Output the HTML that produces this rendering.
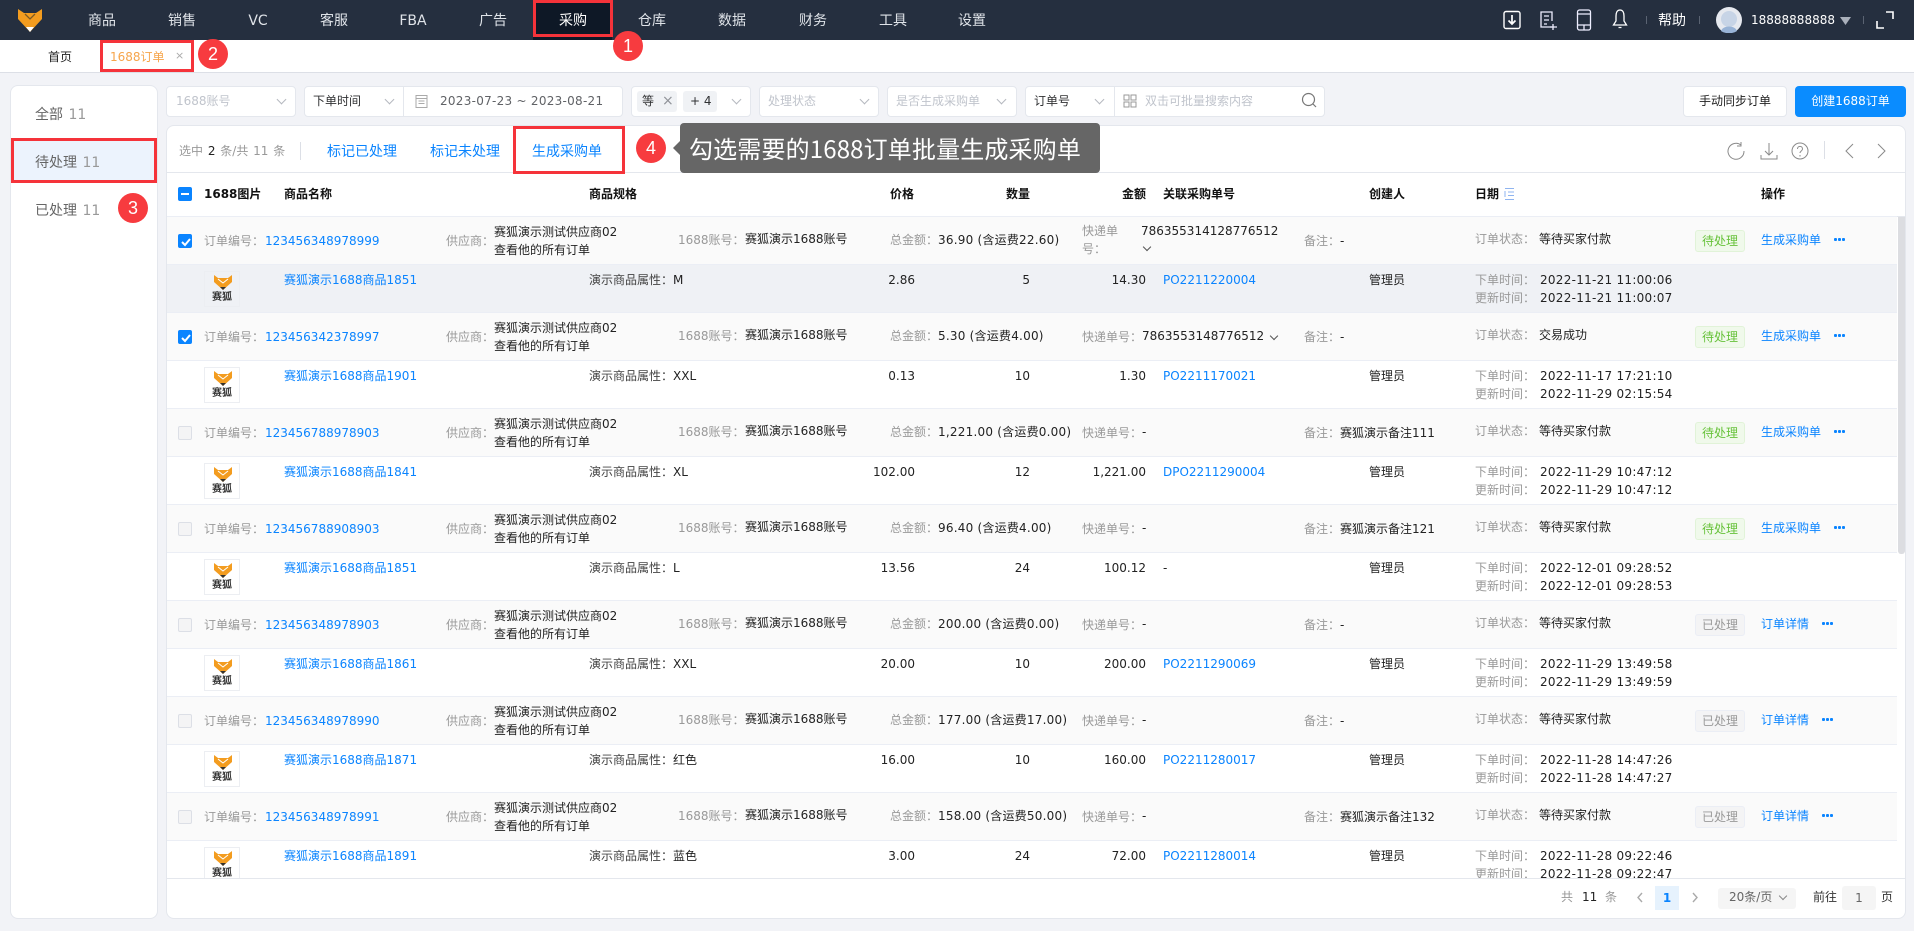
<!DOCTYPE html>
<html lang="zh-CN">
<head>
<meta charset="utf-8">
<title>1688订单</title>
<style>
*{box-sizing:border-box;margin:0;padding:0}
html,body{width:1914px;height:931px;overflow:hidden;background:#f2f3f7}
body{position:relative;font:12px/18px "DejaVu Sans","Noto Sans CJK SC",sans-serif;color:#222}
.a,.a>*{white-space:nowrap}
.a{position:absolute}
.n{position:absolute;top:12px;font-size:14px;color:#dfe3e8;transform:translateX(-50%);white-space:nowrap}
.box{position:absolute;background:#fff;border:1px solid #e4e7ed;border-radius:4px}
.g{color:#999}
.p{color:#c0c4cc}
.l{color:#0a84ff}
.chev{position:absolute;width:7px;height:7px;border-right:1px solid #b5b8bf;border-bottom:1px solid #b5b8bf;transform:rotate(45deg)}
.red{position:absolute;border:3px solid #f5333a}
.bd{position:absolute;width:30px;height:30px;border-radius:50%;background:#f73b3f;color:#fff;text-align:center;font:18px/30px "Liberation Sans",sans-serif}
.o,.q{position:absolute;left:0;width:1897px;height:48px}
.o{background:linear-gradient(#ebeef5,#ebeef5) 167px 0/1730px 1px no-repeat,linear-gradient(#fafafa,#fafafa) 167px 0/1730px 100% no-repeat}
.q{background:linear-gradient(#ebeef5,#ebeef5) 167px 0/1730px 1px no-repeat}
.q.h{background:linear-gradient(#ebeef5,#ebeef5) 167px 0/1730px 1px no-repeat,linear-gradient(#eff1f5,#eff1f5) 167px 0/1730px 100% no-repeat}
.cb{position:absolute;left:178px;top:18px;width:14px;height:14px;border-radius:2px;background:#f4f4f5;border:1px solid #dcdfe6}
.cb.on{background:#0a84ff;border-color:#0a84ff}
.cb.on svg{position:absolute;left:1px;top:1px}
.tag{position:absolute;left:1695px;top:14px;width:50px;height:22px;line-height:20px;text-align:center;border-radius:3px;border:1px solid #e1f3d8;background:#f0f9eb;color:#67c23a}
.tag.d{border-color:#ebeef5;background:#f4f4f5;color:#999}
.more{position:absolute;top:22px;width:11px;height:3px;background:radial-gradient(circle at 1.5px 1.5px,#0a84ff 1.5px,transparent 1.6px) 0 0/4px 3px repeat-x}
.img{position:absolute;left:204px;top:7px;width:36px;height:36px;border:1px solid #eceef2;background:#fff}
.h .img{background:#eff1f5}
.img svg{position:absolute;left:9px;top:3px}
.img b{position:absolute;left:0;right:0;top:17px;text-align:center;font:700 10px/14px "Noto Sans CJK SC",sans-serif;color:#333}
.r{text-align:right}
.sh{position:absolute;top:185px;font-weight:700;color:#111;white-space:nowrap}
.q span[style*="left:1540px"]{letter-spacing:.27px}
.o span[style*="left:938px"]{letter-spacing:.22px}
.q span[style*="right:983px"]{right:982px!important}
.side{word-spacing:1px}
</style>
</head>
<body>
<!-- top nav -->
<div class="a" style="left:0;top:0;width:1914px;height:40px;background:#252f3f"></div>
<div class="a" style="left:533px;top:0;width:79px;height:40px;background:#0e1826"></div>
<svg class="a" style="left:17px;top:8px" width="26" height="25" viewBox="0 0 26 25"><path d="M1 1L7 5H19L25 1V11L13 24L1 11Z" fill="#f39c1f"/><path d="M8 6L13 11L18 6" fill="none" stroke="#7c5a24" stroke-width="1.3"/><path d="M9 19H17L13 24Z" fill="#fff"/></svg>
<span class="n" style="left:102px">商品</span>
<span class="n" style="left:182px">销售</span>
<span class="n" style="left:258px">VC</span>
<span class="n" style="left:334px">客服</span>
<span class="n" style="left:413px">FBA</span>
<span class="n" style="left:493px">广告</span>
<span class="n" style="left:573px;color:#fff">采购</span>
<span class="n" style="left:652px">仓库</span>
<span class="n" style="left:732px">数据</span>
<span class="n" style="left:813px">财务</span>
<span class="n" style="left:893px">工具</span>
<span class="n" style="left:972px">设置</span>
<!-- nav right icons -->
<svg class="a" style="left:1502px;top:10px" width="20" height="20" viewBox="0 0 20 20" fill="none" stroke="#fff" stroke-width="1.4"><rect x="2" y="1.5" width="16" height="17" rx="2"/><path d="M10 5V14M6.5 10.5L10 14L13.5 10.5" stroke-width="1.7"/></svg>
<svg class="a" style="left:1539px;top:10px" width="20" height="20" viewBox="0 0 20 20" fill="none" stroke="#eef" stroke-width="1.3"><path d="M13 17H2V2H13V11"/><path d="M5 6H10M5 10H10M5 14H8M14 14V20M11 17H18"/></svg>
<svg class="a" style="left:1575px;top:9px" width="18" height="22" viewBox="0 0 18 22" fill="none" stroke="#eef" stroke-width="1.3"><rect x="2.5" y="1" width="13" height="20" rx="2"/><path d="M2.5 16H15.5M2.5 5H15.5M9 16V21"/></svg>
<svg class="a" style="left:1611px;top:8px" width="18" height="22" viewBox="0 0 18 22" fill="none" stroke="#fff" stroke-width="1.3"><path d="M9 2C6 2 5 5 5 8V13L2.5 17H15.5L13 13V8C13 5 12 2 9 2ZM7.5 19.5H10.5"/></svg>
<span class="a" style="left:1646px;top:16px;width:1px;height:8px;background:#5a6372"></span>
<span class="a" style="left:1658px;top:12px;font-size:14px;color:#fff">帮助</span>
<span class="a" style="left:1699px;top:16px;width:1px;height:8px;background:#5a6372"></span>
<svg class="a" style="left:1716px;top:7px" width="26" height="26" viewBox="0 0 26 26"><circle cx="13" cy="13" r="13" fill="#e6e9ef"/><circle cx="13" cy="12" r="8" fill="#c7d4e6"/><path d="M5 24C7 18 19 18 21 24C17 27 9 27 5 24Z" fill="#98b3d6"/></svg>
<span class="a" style="left:1751px;top:11px;color:#fff">18888888888</span>
<svg class="a" style="left:1840px;top:17px" width="11" height="8" viewBox="0 0 11 8"><path d="M0 0H11L5.5 8Z" fill="#aab0bb"/></svg>
<span class="a" style="left:1863px;top:16px;width:1px;height:8px;background:#5a6372"></span>
<svg class="a" style="left:1876px;top:10px" width="18" height="20" viewBox="0 0 18 20" fill="none" stroke="#fff" stroke-width="1.6"><path d="M10 2H17V9M1 11V18H8"/></svg>

<!-- tab bar -->
<div class="a" style="left:0;top:40px;width:1914px;height:33px;background:#fff;border-bottom:1px solid #dcdfe6"></div>
<span class="a" style="left:48px;top:48px;color:#222">首页</span>
<span class="a" style="left:110px;top:48px;color:#f6a54b">1688订单</span>
<span class="a" style="left:175px;top:47px;color:#aaa;font-size:11px">×</span>

<!-- sidebar -->
<div class="box" style="left:10px;top:85px;width:148px;height:834px;border-radius:8px"></div>
<div class="a" style="left:12px;top:139px;width:145px;height:44px;background:#ecf3fd;border-left:2px solid #0a84ff"></div>
<span class="a side" style="left:35px;top:106px;font-size:14px;color:#666">全部 <span style="color:#999">11</span></span>
<span class="a side" style="left:35px;top:154px;font-size:14px;color:#666">待处理 <span style="color:#999">11</span></span>
<span class="a side" style="left:35px;top:202px;font-size:14px;color:#666">已处理 <span style="color:#999">11</span></span>

<!-- filters -->
<div class="box" style="left:166px;top:86px;width:130px;height:31px"></div>
<span class="a p" style="left:176px;top:92px">1688账号</span><i class="chev" style="left:278px;top:96px"></i>
<div class="box" style="left:304px;top:86px;width:319px;height:31px"></div>
<span class="a" style="left:313px;top:92px;color:#303133">下单时间</span><i class="chev" style="left:386px;top:96px"></i>
<span class="a" style="left:403px;top:87px;width:1px;height:29px;background:#e4e7ed"></span>
<svg class="a" style="left:415px;top:94px" width="13" height="14" viewBox="0 0 13 14" fill="none" stroke="#aaa"><rect x="1" y="1.5" width="11" height="12"/><path d="M1 4.5H12M3.5 7H9.5M3.5 9.5H9.5"/></svg>
<span class="a" style="left:440px;top:92px;color:#606266;letter-spacing:.27px">2023-07-23 ~ 2023-08-21</span>
<div class="box" style="left:631px;top:86px;width:120px;height:31px"></div>
<span class="a" style="left:637px;top:91px;width:40px;height:21px;background:#f0f2f5;border-radius:3px"></span>
<span class="a" style="left:642px;top:92px;color:#303133">等</span><span class="a" style="left:662px;top:92px;color:#909399;font-size:14px">×</span>
<span class="a" style="left:683px;top:91px;width:34px;height:21px;background:#f0f2f5;border-radius:3px"></span>
<span class="a" style="left:690px;top:92px;color:#303133">+ 4</span><i class="chev" style="left:733px;top:96px"></i>
<div class="box" style="left:759px;top:86px;width:120px;height:31px"></div>
<span class="a p" style="left:768px;top:92px">处理状态</span><i class="chev" style="left:861px;top:96px"></i>
<div class="box" style="left:887px;top:86px;width:130px;height:31px"></div>
<span class="a p" style="left:896px;top:92px">是否生成采购单</span><i class="chev" style="left:998px;top:96px"></i>
<div class="box" style="left:1025px;top:86px;width:300px;height:31px"></div>
<span class="a" style="left:1034px;top:92px;color:#303133">订单号</span><i class="chev" style="left:1096px;top:96px"></i>
<span class="a" style="left:1114px;top:87px;width:1px;height:29px;background:#e4e7ed"></span>
<svg class="a" style="left:1123px;top:94px" width="14" height="14" viewBox="0 0 14 14" fill="none" stroke="#999"><rect x="1" y="1" width="5" height="5"/><rect x="8" y="1" width="5" height="5"/><rect x="1" y="8" width="5" height="5"/><rect x="8" y="8" width="5" height="5"/></svg>
<span class="a p" style="left:1145px;top:92px">双击可批量搜索内容</span>
<svg class="a" style="left:1301px;top:92px" width="16" height="16" viewBox="0 0 16 16" fill="none" stroke="#777" stroke-width="1.2"><circle cx="7.5" cy="7.5" r="6"/><path d="M12 12L15 15"/></svg>
<div class="box" style="left:1683px;top:86px;width:104px;height:31px;text-align:center;line-height:29px;color:#222">手动同步订单</div>
<div class="a" style="left:1795px;top:86px;width:111px;height:31px;border-radius:4px;background:#0a8cff;color:#fff;text-align:center;line-height:31px">创建1688订单</div>

<!-- main card -->
<div class="box" style="left:166px;top:125px;width:1740px;height:794px;border-radius:8px"></div>
<div class="a" style="left:167px;top:172px;width:1738px;height:1px;background:#e4e7ed"></div>
<div class="a" style="left:167px;top:216px;width:1738px;height:1px;background:#e4e7ed"></div>
<span class="a g" style="left:179px;top:142px;word-spacing:1px">选中 <span style="color:#222">2</span> 条/共 11 条</span>
<span class="a" style="left:300px;top:142px;width:1px;height:18px;background:#dcdfe6"></span>
<span class="a l" style="left:327px;top:143px;font-size:14px">标记已处理</span>
<span class="a l" style="left:430px;top:143px;font-size:14px">标记未处理</span>
<span class="a l" style="left:532px;top:143px;font-size:14px">生成采购单</span>
<!-- card toolbar icons -->
<svg class="a" style="left:1726px;top:141px" width="20" height="20" viewBox="0 0 20 20" fill="none" stroke="#8a8a8a" stroke-width="1"><path d="M15 4A8 8 0 1 0 18 10M15 1V5H11"/></svg>
<svg class="a" style="left:1760px;top:141px" width="18" height="20" viewBox="0 0 18 20" fill="none" stroke="#8a8a8a" stroke-width="1"><path d="M9 2V14M5 10L9 14L13 10M1 14V18H17V14"/></svg>
<svg class="a" style="left:1791px;top:141px" width="18" height="20" viewBox="0 0 18 20" fill="none" stroke="#8a8a8a" stroke-width="1"><circle cx="9" cy="10" r="8"/><path d="M6.5 8C6.5 4.5 11.5 4.5 11.5 8C11.5 10 9 10 9 12M9 14V15.5"/></svg>
<span class="a" style="left:1824px;top:141px;width:1px;height:18px;background:#dcdfe6"></span>
<svg class="a" style="left:1844px;top:142px" width="10" height="18" viewBox="0 0 10 18" fill="none" stroke="#8a8a8a" stroke-width="1"><path d="M9 2L2 9L9 16"/></svg>
<svg class="a" style="left:1877px;top:142px" width="10" height="18" viewBox="0 0 10 18" fill="none" stroke="#8a8a8a" stroke-width="1"><path d="M1 2L8 9L1 16"/></svg>

<!-- table head -->
<span class="cb on" style="top:187px;border-radius:2px"><span class="a" style="left:2px;top:5px;width:8px;height:2px;background:#fff"></span></span>
<span class="sh" style="left:204px">1688图片</span>
<span class="sh" style="left:284px">商品名称</span>
<span class="sh" style="left:589px">商品规格</span>
<span class="sh" style="left:890px">价格</span>
<span class="sh" style="left:1006px">数量</span>
<span class="sh" style="left:1122px">金额</span>
<span class="sh" style="left:1163px">关联采购单号</span>
<span class="sh" style="left:1369px">创建人</span>
<span class="sh" style="left:1475px">日期</span>
<svg class="a" style="left:1503px;top:187px" width="12" height="14" viewBox="0 0 12 14" fill="none" stroke="#8fb4f0"><path d="M2 1.5H11M5 5H11M5 8.5H11M2 12.5H11M2 4V10"/></svg>
<span class="sh" style="left:1761px">操作</span>

<!-- table body -->
<div class="a" style="left:0;top:0;width:1897px;height:878px;overflow:hidden">

<div class="o" style="top:216px">
<span class="cb on"><svg width="12" height="12" viewBox="0 0 12 12" fill="none" stroke="#fff" stroke-width="2"><path d="M2 6L5 9L10 3"/></svg></span>
<span class="a g" style="left:204px;top:16px">订单编号：</span><span class="a l" style="left:265px;top:16px">123456348978999</span>
<span class="a g" style="left:446px;top:16px">供应商：</span><span class="a" style="left:494px;top:7px">赛狐演示测试供应商02<br>查看他的所有订单</span>
<span class="a g" style="left:678px;top:15px">1688账号：</span><span class="a" style="left:745px;top:14px">赛狐演示1688账号</span>
<span class="a g" style="left:890px;top:15px">总金额：</span><span class="a" style="left:938px;top:15px">36.90 (含运费22.60)</span>
<span class="a g" style="left:1082px;top:6px">快递单<br>号：</span><span class="a" style="left:1141px;top:6px">786355314128776512</span><i class="chev" style="left:1144px;top:28px;width:6px;height:6px;border-color:#555"></i>
<span class="a g" style="left:1304px;top:16px">备注：</span><span class="a" style="left:1340px;top:16px">-</span>
<span class="a g" style="left:1475px;top:14px">订单状态：</span><span class="a" style="left:1539px;top:14px">等待买家付款</span>
<span class="tag">待处理</span><span class="a l" style="left:1761px;top:15px">生成采购单</span><i class="more" style="left:1834px"></i>
</div>
<div class="q h" style="top:264px">
<span class="img"><svg width="18" height="16" viewBox="0 0 18 16"><path d="M0 0L4 3H14L18 0V7L9 15L0 7Z" fill="#f39c1f"/><path d="M4 4L9 8L14 4" fill="none" stroke="#fff"/><path d="M6 12H12L9 15Z" fill="#333"/></svg><b>赛狐</b></span>
<span class="a l" style="left:284px;top:7px">赛狐演示1688商品1851</span>
<span class="a" style="left:589px;top:7px"><span style="color:#444">演示商品属性：</span>M</span>
<span class="a r" style="right:983px;top:7px">2.86</span>
<span class="a r" style="right:867px;top:7px">5</span>
<span class="a r" style="right:751px;top:7px">14.30</span>
<span class="a l" style="left:1163px;top:7px">PO2211220004</span>
<span class="a" style="left:1369px;top:7px">管理员</span>
<span class="a g" style="left:1475px;top:7px">下单时间：<br>更新时间：</span><span class="a" style="left:1540px;top:7px">2022-11-21 11:00:06<br>2022-11-21 11:00:07</span>
</div>

<div class="o" style="top:312px">
<span class="cb on"><svg width="12" height="12" viewBox="0 0 12 12" fill="none" stroke="#fff" stroke-width="2"><path d="M2 6L5 9L10 3"/></svg></span>
<span class="a g" style="left:204px;top:16px">订单编号：</span><span class="a l" style="left:265px;top:16px">123456342378997</span>
<span class="a g" style="left:446px;top:16px">供应商：</span><span class="a" style="left:494px;top:7px">赛狐演示测试供应商02<br>查看他的所有订单</span>
<span class="a g" style="left:678px;top:15px">1688账号：</span><span class="a" style="left:745px;top:14px">赛狐演示1688账号</span>
<span class="a g" style="left:890px;top:15px">总金额：</span><span class="a" style="left:938px;top:15px">5.30 (含运费4.00)</span>
<span class="a g" style="left:1082px;top:16px">快递单号：</span><span class="a" style="left:1142px;top:15px">7863553148776512</span><i class="chev" style="left:1271px;top:21px;width:6px;height:6px;border-color:#555"></i>
<span class="a g" style="left:1304px;top:16px">备注：</span><span class="a" style="left:1340px;top:16px">-</span>
<span class="a g" style="left:1475px;top:14px">订单状态：</span><span class="a" style="left:1539px;top:14px">交易成功</span>
<span class="tag">待处理</span><span class="a l" style="left:1761px;top:15px">生成采购单</span><i class="more" style="left:1834px"></i>
</div>
<div class="q" style="top:360px">
<span class="img"><svg width="18" height="16" viewBox="0 0 18 16"><path d="M0 0L4 3H14L18 0V7L9 15L0 7Z" fill="#f39c1f"/><path d="M4 4L9 8L14 4" fill="none" stroke="#fff"/><path d="M6 12H12L9 15Z" fill="#333"/></svg><b>赛狐</b></span>
<span class="a l" style="left:284px;top:7px">赛狐演示1688商品1901</span>
<span class="a" style="left:589px;top:7px"><span style="color:#444">演示商品属性：</span>XXL</span>
<span class="a r" style="right:983px;top:7px">0.13</span>
<span class="a r" style="right:867px;top:7px">10</span>
<span class="a r" style="right:751px;top:7px">1.30</span>
<span class="a l" style="left:1163px;top:7px">PO2211170021</span>
<span class="a" style="left:1369px;top:7px">管理员</span>
<span class="a g" style="left:1475px;top:7px">下单时间：<br>更新时间：</span><span class="a" style="left:1540px;top:7px">2022-11-17 17:21:10<br>2022-11-29 02:15:54</span>
</div>

<div class="o" style="top:408px">
<span class="cb"></span>
<span class="a g" style="left:204px;top:16px">订单编号：</span><span class="a l" style="left:265px;top:16px">123456788978903</span>
<span class="a g" style="left:446px;top:16px">供应商：</span><span class="a" style="left:494px;top:7px">赛狐演示测试供应商02<br>查看他的所有订单</span>
<span class="a g" style="left:678px;top:15px">1688账号：</span><span class="a" style="left:745px;top:14px">赛狐演示1688账号</span>
<span class="a g" style="left:890px;top:15px">总金额：</span><span class="a" style="left:938px;top:15px">1,221.00 (含运费0.00)</span>
<span class="a g" style="left:1082px;top:16px">快递单号：</span><span class="a" style="left:1142px;top:15px">-</span>
<span class="a g" style="left:1304px;top:16px">备注：</span><span class="a" style="left:1340px;top:16px">赛狐演示备注111</span>
<span class="a g" style="left:1475px;top:14px">订单状态：</span><span class="a" style="left:1539px;top:14px">等待买家付款</span>
<span class="tag">待处理</span><span class="a l" style="left:1761px;top:15px">生成采购单</span><i class="more" style="left:1834px"></i>
</div>
<div class="q" style="top:456px">
<span class="img"><svg width="18" height="16" viewBox="0 0 18 16"><path d="M0 0L4 3H14L18 0V7L9 15L0 7Z" fill="#f39c1f"/><path d="M4 4L9 8L14 4" fill="none" stroke="#fff"/><path d="M6 12H12L9 15Z" fill="#333"/></svg><b>赛狐</b></span>
<span class="a l" style="left:284px;top:7px">赛狐演示1688商品1841</span>
<span class="a" style="left:589px;top:7px"><span style="color:#444">演示商品属性：</span>XL</span>
<span class="a r" style="right:983px;top:7px">102.00</span>
<span class="a r" style="right:867px;top:7px">12</span>
<span class="a r" style="right:751px;top:7px">1,221.00</span>
<span class="a l" style="left:1163px;top:7px">DPO2211290004</span>
<span class="a" style="left:1369px;top:7px">管理员</span>
<span class="a g" style="left:1475px;top:7px">下单时间：<br>更新时间：</span><span class="a" style="left:1540px;top:7px">2022-11-29 10:47:12<br>2022-11-29 10:47:12</span>
</div>

<div class="o" style="top:504px">
<span class="cb"></span>
<span class="a g" style="left:204px;top:16px">订单编号：</span><span class="a l" style="left:265px;top:16px">123456788908903</span>
<span class="a g" style="left:446px;top:16px">供应商：</span><span class="a" style="left:494px;top:7px">赛狐演示测试供应商02<br>查看他的所有订单</span>
<span class="a g" style="left:678px;top:15px">1688账号：</span><span class="a" style="left:745px;top:14px">赛狐演示1688账号</span>
<span class="a g" style="left:890px;top:15px">总金额：</span><span class="a" style="left:938px;top:15px">96.40 (含运费4.00)</span>
<span class="a g" style="left:1082px;top:16px">快递单号：</span><span class="a" style="left:1142px;top:15px">-</span>
<span class="a g" style="left:1304px;top:16px">备注：</span><span class="a" style="left:1340px;top:16px">赛狐演示备注121</span>
<span class="a g" style="left:1475px;top:14px">订单状态：</span><span class="a" style="left:1539px;top:14px">等待买家付款</span>
<span class="tag">待处理</span><span class="a l" style="left:1761px;top:15px">生成采购单</span><i class="more" style="left:1834px"></i>
</div>
<div class="q" style="top:552px">
<span class="img"><svg width="18" height="16" viewBox="0 0 18 16"><path d="M0 0L4 3H14L18 0V7L9 15L0 7Z" fill="#f39c1f"/><path d="M4 4L9 8L14 4" fill="none" stroke="#fff"/><path d="M6 12H12L9 15Z" fill="#333"/></svg><b>赛狐</b></span>
<span class="a l" style="left:284px;top:7px">赛狐演示1688商品1851</span>
<span class="a" style="left:589px;top:7px"><span style="color:#444">演示商品属性：</span>L</span>
<span class="a r" style="right:983px;top:7px">13.56</span>
<span class="a r" style="right:867px;top:7px">24</span>
<span class="a r" style="right:751px;top:7px">100.12</span>
<span class="a" style="left:1163px;top:7px">-</span>
<span class="a" style="left:1369px;top:7px">管理员</span>
<span class="a g" style="left:1475px;top:7px">下单时间：<br>更新时间：</span><span class="a" style="left:1540px;top:7px">2022-12-01 09:28:52<br>2022-12-01 09:28:53</span>
</div>

<div class="o" style="top:600px">
<span class="cb"></span>
<span class="a g" style="left:204px;top:16px">订单编号：</span><span class="a l" style="left:265px;top:16px">123456348978903</span>
<span class="a g" style="left:446px;top:16px">供应商：</span><span class="a" style="left:494px;top:7px">赛狐演示测试供应商02<br>查看他的所有订单</span>
<span class="a g" style="left:678px;top:15px">1688账号：</span><span class="a" style="left:745px;top:14px">赛狐演示1688账号</span>
<span class="a g" style="left:890px;top:15px">总金额：</span><span class="a" style="left:938px;top:15px">200.00 (含运费0.00)</span>
<span class="a g" style="left:1082px;top:16px">快递单号：</span><span class="a" style="left:1142px;top:15px">-</span>
<span class="a g" style="left:1304px;top:16px">备注：</span><span class="a" style="left:1340px;top:16px">-</span>
<span class="a g" style="left:1475px;top:14px">订单状态：</span><span class="a" style="left:1539px;top:14px">等待买家付款</span>
<span class="tag d">已处理</span><span class="a l" style="left:1761px;top:15px">订单详情</span><i class="more" style="left:1822px"></i>
</div>
<div class="q" style="top:648px">
<span class="img"><svg width="18" height="16" viewBox="0 0 18 16"><path d="M0 0L4 3H14L18 0V7L9 15L0 7Z" fill="#f39c1f"/><path d="M4 4L9 8L14 4" fill="none" stroke="#fff"/><path d="M6 12H12L9 15Z" fill="#333"/></svg><b>赛狐</b></span>
<span class="a l" style="left:284px;top:7px">赛狐演示1688商品1861</span>
<span class="a" style="left:589px;top:7px"><span style="color:#444">演示商品属性：</span>XXL</span>
<span class="a r" style="right:983px;top:7px">20.00</span>
<span class="a r" style="right:867px;top:7px">10</span>
<span class="a r" style="right:751px;top:7px">200.00</span>
<span class="a l" style="left:1163px;top:7px">PO2211290069</span>
<span class="a" style="left:1369px;top:7px">管理员</span>
<span class="a g" style="left:1475px;top:7px">下单时间：<br>更新时间：</span><span class="a" style="left:1540px;top:7px">2022-11-29 13:49:58<br>2022-11-29 13:49:59</span>
</div>

<div class="o" style="top:696px">
<span class="cb"></span>
<span class="a g" style="left:204px;top:16px">订单编号：</span><span class="a l" style="left:265px;top:16px">123456348978990</span>
<span class="a g" style="left:446px;top:16px">供应商：</span><span class="a" style="left:494px;top:7px">赛狐演示测试供应商02<br>查看他的所有订单</span>
<span class="a g" style="left:678px;top:15px">1688账号：</span><span class="a" style="left:745px;top:14px">赛狐演示1688账号</span>
<span class="a g" style="left:890px;top:15px">总金额：</span><span class="a" style="left:938px;top:15px">177.00 (含运费17.00)</span>
<span class="a g" style="left:1082px;top:16px">快递单号：</span><span class="a" style="left:1142px;top:15px">-</span>
<span class="a g" style="left:1304px;top:16px">备注：</span><span class="a" style="left:1340px;top:16px">-</span>
<span class="a g" style="left:1475px;top:14px">订单状态：</span><span class="a" style="left:1539px;top:14px">等待买家付款</span>
<span class="tag d">已处理</span><span class="a l" style="left:1761px;top:15px">订单详情</span><i class="more" style="left:1822px"></i>
</div>
<div class="q" style="top:744px">
<span class="img"><svg width="18" height="16" viewBox="0 0 18 16"><path d="M0 0L4 3H14L18 0V7L9 15L0 7Z" fill="#f39c1f"/><path d="M4 4L9 8L14 4" fill="none" stroke="#fff"/><path d="M6 12H12L9 15Z" fill="#333"/></svg><b>赛狐</b></span>
<span class="a l" style="left:284px;top:7px">赛狐演示1688商品1871</span>
<span class="a" style="left:589px;top:7px"><span style="color:#444">演示商品属性：</span>红色</span>
<span class="a r" style="right:983px;top:7px">16.00</span>
<span class="a r" style="right:867px;top:7px">10</span>
<span class="a r" style="right:751px;top:7px">160.00</span>
<span class="a l" style="left:1163px;top:7px">PO2211280017</span>
<span class="a" style="left:1369px;top:7px">管理员</span>
<span class="a g" style="left:1475px;top:7px">下单时间：<br>更新时间：</span><span class="a" style="left:1540px;top:7px">2022-11-28 14:47:26<br>2022-11-28 14:47:27</span>
</div>

<div class="o" style="top:792px">
<span class="cb"></span>
<span class="a g" style="left:204px;top:16px">订单编号：</span><span class="a l" style="left:265px;top:16px">123456348978991</span>
<span class="a g" style="left:446px;top:16px">供应商：</span><span class="a" style="left:494px;top:7px">赛狐演示测试供应商02<br>查看他的所有订单</span>
<span class="a g" style="left:678px;top:15px">1688账号：</span><span class="a" style="left:745px;top:14px">赛狐演示1688账号</span>
<span class="a g" style="left:890px;top:15px">总金额：</span><span class="a" style="left:938px;top:15px">158.00 (含运费50.00)</span>
<span class="a g" style="left:1082px;top:16px">快递单号：</span><span class="a" style="left:1142px;top:15px">-</span>
<span class="a g" style="left:1304px;top:16px">备注：</span><span class="a" style="left:1340px;top:16px">赛狐演示备注132</span>
<span class="a g" style="left:1475px;top:14px">订单状态：</span><span class="a" style="left:1539px;top:14px">等待买家付款</span>
<span class="tag d">已处理</span><span class="a l" style="left:1761px;top:15px">订单详情</span><i class="more" style="left:1822px"></i>
</div>
<div class="q" style="top:840px">
<span class="img"><svg width="18" height="16" viewBox="0 0 18 16"><path d="M0 0L4 3H14L18 0V7L9 15L0 7Z" fill="#f39c1f"/><path d="M4 4L9 8L14 4" fill="none" stroke="#fff"/><path d="M6 12H12L9 15Z" fill="#333"/></svg><b>赛狐</b></span>
<span class="a l" style="left:284px;top:7px">赛狐演示1688商品1891</span>
<span class="a" style="left:589px;top:7px"><span style="color:#444">演示商品属性：</span>蓝色</span>
<span class="a r" style="right:983px;top:7px">3.00</span>
<span class="a r" style="right:867px;top:7px">24</span>
<span class="a r" style="right:751px;top:7px">72.00</span>
<span class="a l" style="left:1163px;top:7px">PO2211280014</span>
<span class="a" style="left:1369px;top:7px">管理员</span>
<span class="a g" style="left:1475px;top:7px">下单时间：<br>更新时间：</span><span class="a" style="left:1540px;top:7px">2022-11-28 09:22:46<br>2022-11-28 09:22:47</span>
</div>
</div>

<!-- scrollbar -->
<div class="a" style="left:1898px;top:217px;width:7px;height:337px;background:#dcdde1;border-radius:0 0 3px 3px"></div>

<!-- footer -->
<div class="a" style="left:167px;top:878px;width:1738px;height:1px;background:#e4e7ed"></div>
<span class="a g" style="left:1561px;top:888px">共</span><span class="a" style="left:1582px;top:888px;color:#222">11</span><span class="a g" style="left:1605px;top:888px">条</span>
<svg class="a" style="left:1636px;top:892px" width="8" height="11" viewBox="0 0 8 11" fill="none" stroke="#aaa" stroke-width="1.4"><path d="M6 1L2 5.5L6 10"/></svg>
<span class="a" style="left:1655px;top:886px;width:24px;height:24px;background:#e6f2fd;color:#0a84ff;font-weight:700;text-align:center;line-height:24px">1</span>
<svg class="a" style="left:1691px;top:892px" width="8" height="11" viewBox="0 0 8 11" fill="none" stroke="#aaa" stroke-width="1.4"><path d="M2 1L6 5.5L2 10"/></svg>
<span class="a" style="left:1718px;top:888px;width:78px;height:21px;background:#f5f5f5;border-radius:3px"></span>
<span class="a" style="left:1729px;top:888px;color:#666">20条/页</span><i class="chev" style="left:1780px;top:893px;width:6px;height:6px;border-color:#888"></i>
<span class="a" style="left:1813px;top:888px;color:#333">前往</span>
<span class="a" style="left:1842px;top:886px;width:34px;height:24px;background:#f5f5f5;border-radius:3px;text-align:center;line-height:24px;color:#666">1</span>
<span class="a" style="left:1881px;top:888px;color:#333">页</span>

<!-- annotations -->
<div class="red" style="left:533px;top:0;width:80px;height:37px"></div>
<div class="red" style="left:100px;top:40px;width:94px;height:32px"></div>
<div class="red" style="left:11px;top:138px;width:146px;height:45px"></div>
<div class="red" style="left:513px;top:126px;width:112px;height:48px"></div>
<div class="bd" style="left:613px;top:31px">1</div>
<div class="bd" style="left:198px;top:39px">2</div>
<div class="bd" style="left:118px;top:193px">3</div>
<div class="bd" style="left:636px;top:133px">4</div>
<div class="a" style="left:680px;top:123px;width:420px;height:50px;background:#666;border-radius:4px"></div>
<div class="a" style="left:673px;top:141px;width:0;height:0;border:7px solid transparent;border-left:0;border-right-color:#666"></div>
<div class="a" style="left:689px;top:131px;font:24px/34px 'Noto Sans CJK SC',sans-serif;color:#fff;letter-spacing:.15px">勾选需要的1688订单批量生成采购单</div>
</body>
</html>
